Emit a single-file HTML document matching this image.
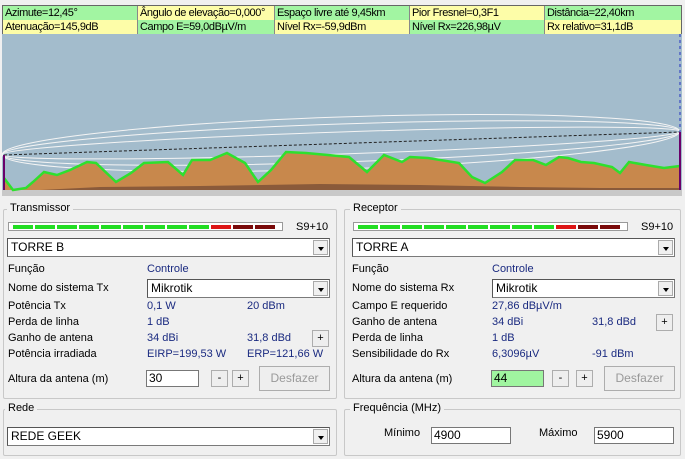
<!DOCTYPE html><html><head><meta charset="utf-8"><style>
*{margin:0;padding:0;box-sizing:border-box}
body{width:685px;height:459px;background:#f0f0f0;font-family:"Liberation Sans",sans-serif;font-size:11px;color:#000;position:relative;overflow:hidden}
.a{position:absolute;white-space:nowrap}
.c{position:absolute;height:14px;line-height:14px;padding-left:2px;border-right:1px solid #888;white-space:nowrap;overflow:hidden;letter-spacing:-0.4px}
.g{background:#a2f5a2}.y{background:#fdfda8}
.v{color:#1a2a80}
.fr{position:absolute;border:1px solid #c8c8c8;border-radius:2px}
.lg{position:absolute;background:#f0f0f0;padding:0 3px;font-size:11px}
.cb{position:absolute;background:#fff;border:1px solid #7a7a7a;border-top-color:#555;border-left-color:#555;height:19px;line-height:17px;padding-left:3px;font-size:12px}
.cb i{position:absolute;right:1px;top:1px;width:15px;height:15px;background:#f0f0f0;border:1px solid #aaa}
.cb i:after{content:"";position:absolute;left:4px;top:6px;border-left:3px solid transparent;border-right:3px solid transparent;border-top:4px solid #000}
.btn{position:absolute;background:#eee;border:1px solid #adadad;text-align:center;font-size:11px}
.in{position:absolute;background:#fff;border:1px solid #777;height:17px;line-height:15px;padding-left:2px;font-size:12px}
.m{position:absolute;height:9px;border:1px solid #999;background:#fff}
.m b{position:absolute;top:2px;height:4px;width:20px}
</style></head><body>
<div class="a" style="left:2px;top:5px;width:680px;height:29px;border:1px solid #666"></div>
<div class="c g" style="left:3px;top:6px;width:135px">Azimute=12,45°</div>
<div class="c y" style="left:138px;top:6px;width:137px">Ângulo de elevação=0,000°</div>
<div class="c g" style="left:275px;top:6px;width:135px">Espaço livre até 9,45km</div>
<div class="c y" style="left:410px;top:6px;width:135px">Pior Fresnel=0,3F1</div>
<div class="c g" style="left:545px;top:6px;width:136px;border:0">Distância=22,40km</div>
<div class="c y" style="left:3px;top:20px;width:135px">Atenuação=145,9dB</div>
<div class="c g" style="left:138px;top:20px;width:137px">Campo E=59,0dBµV/m</div>
<div class="c y" style="left:275px;top:20px;width:135px">Nível Rx=-59,9dBm</div>
<div class="c g" style="left:410px;top:20px;width:135px">Nível Rx=226,98µV</div>
<div class="c y" style="left:545px;top:20px;width:136px;border:0">Rx relativo=31,1dB</div>
<svg class="a" style="left:2px;top:34px" width="680" height="162" viewBox="2 34 680 162">
<rect x="2" y="34" width="680" height="162" fill="#a3bccc"/>
<rect x="2" y="190" width="680" height="6" fill="#c8c8c8"/>
<g fill="none" stroke="#f4f4f4" stroke-width="1">
<ellipse cx="341" cy="143" rx="339" ry="26" transform="rotate(-1.95 341 143)"/>
<ellipse cx="341" cy="143" rx="339" ry="19" transform="rotate(-1.95 341 143)"/>
<ellipse cx="341" cy="143" rx="339" ry="11" transform="rotate(-1.95 341 143)"/>
</g>
<polygon fill="#c8884c" points="4,178 13,190 26,188 33,182 44,172 57,175 70,170 87,162 96,163 116,182 131,173 144,163 168,162 183,175 192,160 210,160 227,153 245,163 258,182 271,170 286,152 306,153 349,157 367,172 384,155 402,162 410,157 428,158 459,163 472,177 485,183 502,172 515,160 533,160 546,165 559,157 568,158 581,162 594,163 612,167 620,173 629,162 646,165 664,168 680,166 680,190 4,190"/>
<polygon fill="#8a5a3a" points="40,190 100,187 200,186 320,184 420,185 520,187 600,188 680,188 680,190 40,190"/>
<polyline fill="none" stroke="#2ee02e" stroke-width="2.5" points="4,178 13,190 26,188 33,182 44,172 57,175 70,170 87,162 96,163 116,182 131,173 144,163 168,162 183,175 192,160 210,160 227,153 245,163 258,182 271,170 286,152 306,153 349,157 367,172 384,155 402,162 410,157 428,158 459,163 472,177 485,183 502,172 515,160 533,160 546,165 559,157 568,158 581,162 594,163 612,167 620,173 629,162 646,165 664,168 680,166"/>
<line x1="4" y1="155" x2="680" y2="132" stroke="#222" stroke-dasharray="3,2"/>
<line x1="4" y1="155" x2="4" y2="190" stroke="#6a006a" stroke-width="2"/>
<line x1="680" y1="132" x2="680" y2="190" stroke="#6a006a" stroke-width="2"/>
<line x1="680" y1="34" x2="680" y2="132" stroke="#2030c0" stroke-dasharray="3,3"/>
</svg>

<!-- Transmissor -->
<div class="fr" style="left:3px;top:209px;width:334px;height:190px"></div>
<div class="lg" style="left:7px;top:202px">Transmissor</div>
<div class="m" style="left:8px;top:222px;width:275px">
<b style="left:4px;background:#22dd22"></b><b style="left:26px;background:#22dd22"></b><b style="left:48px;background:#22dd22"></b><b style="left:70px;background:#22dd22"></b><b style="left:92px;background:#22dd22"></b><b style="left:114px;background:#22dd22"></b><b style="left:136px;background:#22dd22"></b><b style="left:158px;background:#22dd22"></b><b style="left:180px;background:#22dd22"></b><b style="left:202px;background:#dd1515"></b><b style="left:224px;background:#7a0a0a"></b><b style="left:246px;background:#7a0a0a"></b></div>
<div class="a" style="left:296px;top:221px">S9+10</div>
<div class="cb" style="left:7px;top:238px;width:323px">TORRE B<i></i></div>
<div class="a" style="left:8px;top:263px">Função</div><div class="a v" style="left:147px;top:263px">Controle</div>
<div class="a" style="left:8px;top:282px">Nome do sistema Tx</div>
<div class="cb" style="left:147px;top:279px;width:183px">Mikrotik<i></i></div>
<div class="a" style="left:8px;top:300px">Potência Tx</div><div class="a v" style="left:147px;top:300px">0,1 W</div><div class="a v" style="left:247px;top:300px">20 dBm</div>
<div class="a" style="left:8px;top:316px">Perda de linha</div><div class="a v" style="left:147px;top:316px">1 dB</div>
<div class="a" style="left:8px;top:332px">Ganho de antena</div><div class="a v" style="left:147px;top:332px">34 dBi</div><div class="a v" style="left:247px;top:332px">31,8 dBd</div>
<div class="btn" style="left:312px;top:330px;width:17px;height:17px;line-height:15px">+</div>
<div class="a" style="left:8px;top:348px">Potência irradiada</div><div class="a v" style="left:147px;top:348px">EIRP=199,53 W</div><div class="a v" style="left:247px;top:348px">ERP=121,66 W</div>
<div class="a" style="left:8px;top:373px">Altura da antena (m)</div>
<div class="in" style="left:146px;top:370px;width:53px">30</div>
<div class="btn" style="left:211px;top:370px;width:17px;height:17px;line-height:15px">-</div>
<div class="btn" style="left:232px;top:370px;width:17px;height:17px;line-height:15px">+</div>
<div class="btn" style="left:259px;top:366px;width:71px;height:25px;line-height:23px;color:#999;font-size:12px">Desfazer</div>

<!-- Receptor -->
<div class="fr" style="left:344px;top:209px;width:337px;height:190px"></div>
<div class="lg" style="left:350px;top:202px">Receptor</div>
<div class="m" style="left:353px;top:222px;width:275px">
<b style="left:4px;background:#22dd22"></b><b style="left:26px;background:#22dd22"></b><b style="left:48px;background:#22dd22"></b><b style="left:70px;background:#22dd22"></b><b style="left:92px;background:#22dd22"></b><b style="left:114px;background:#22dd22"></b><b style="left:136px;background:#22dd22"></b><b style="left:158px;background:#22dd22"></b><b style="left:180px;background:#22dd22"></b><b style="left:202px;background:#dd1515"></b><b style="left:224px;background:#7a0a0a"></b><b style="left:246px;background:#7a0a0a"></b></div>
<div class="a" style="left:641px;top:221px">S9+10</div>
<div class="cb" style="left:352px;top:238px;width:323px">TORRE A<i></i></div>
<div class="a" style="left:352px;top:263px">Função</div><div class="a v" style="left:492px;top:263px">Controle</div>
<div class="a" style="left:352px;top:282px">Nome do sistema Rx</div>
<div class="cb" style="left:492px;top:279px;width:183px">Mikrotik<i></i></div>
<div class="a" style="left:352px;top:300px">Campo E requerido</div><div class="a v" style="left:492px;top:300px">27,86 dBµV/m</div>
<div class="a" style="left:352px;top:316px">Ganho de antena</div><div class="a v" style="left:492px;top:316px">34 dBi</div><div class="a v" style="left:592px;top:316px">31,8 dBd</div>
<div class="btn" style="left:656px;top:314px;width:17px;height:17px;line-height:15px">+</div>
<div class="a" style="left:352px;top:332px">Perda de linha</div><div class="a v" style="left:492px;top:332px">1 dB</div>
<div class="a" style="left:352px;top:348px">Sensibilidade do Rx</div><div class="a v" style="left:492px;top:348px">6,3096µV</div><div class="a v" style="left:592px;top:348px">-91 dBm</div>
<div class="a" style="left:352px;top:373px">Altura da antena (m)</div>
<div class="in" style="left:491px;top:370px;width:53px;background:#a0f5a0">44</div>
<div class="btn" style="left:552px;top:370px;width:17px;height:17px;line-height:15px">-</div>
<div class="btn" style="left:576px;top:370px;width:17px;height:17px;line-height:15px">+</div>
<div class="btn" style="left:604px;top:366px;width:71px;height:25px;line-height:23px;color:#999;font-size:12px">Desfazer</div>

<!-- Rede -->
<div class="fr" style="left:3px;top:409px;width:334px;height:47px"></div>
<div class="lg" style="left:5px;top:402px">Rede</div>
<div class="cb" style="left:7px;top:427px;width:323px">REDE GEEK<i></i></div>

<!-- Frequencia -->
<div class="fr" style="left:344px;top:409px;width:337px;height:47px"></div>
<div class="lg" style="left:350px;top:402px">Frequência (MHz)</div>
<div class="a" style="left:384px;top:427px">Mínimo</div>
<div class="in" style="left:431px;top:427px;width:80px">4900</div>
<div class="a" style="left:539px;top:427px">Máximo</div>
<div class="in" style="left:594px;top:427px;width:80px">5900</div>
</body></html>
